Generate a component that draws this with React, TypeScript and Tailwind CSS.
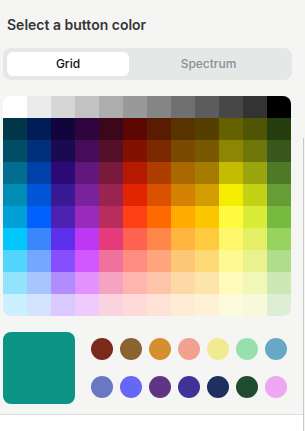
import React from 'react'

const GRID: string[][] = [
  ['#FFFFFF', '#EBEBEB', '#D6D6D6', '#C2C2C2', '#ADADAD', '#999999', '#858585', '#707070', '#5C5C5C', '#474747', '#333333', '#000000'],
  ['#00374A', '#011D57', '#11053B', '#2E063D', '#3C071B', '#5C0701', '#5A1C00', '#583300', '#563D00', '#666100', '#4F5504', '#263E0F'],
  ['#004D65', '#012F7B', '#1A0A52', '#450D59', '#551029', '#831100', '#7B2900', '#7A4A00', '#785800', '#8D8602', '#6F760A', '#38571A'],
  ['#016E8F', '#0042A9', '#2C0977', '#61187C', '#791A3D', '#B51A00', '#AD3E00', '#A96800', '#A67B01', '#C4BC00', '#9BA50E', '#4E7A27'],
  ['#008CB4', '#0056D6', '#371A94', '#7A219E', '#99244F', '#E22400', '#DA5100', '#D38301', '#D19D01', '#F5EC00', '#C3D117', '#669D34'],
  ['#00A1D8', '#0061FD', '#4D22B2', '#982ABC', '#B92D5D', '#FF4015', '#FF6A00', '#FFAB01', '#FCC700', '#FEFB41', '#D9EC37', '#76BB40'],
  ['#01C7FC', '#3A87FD', '#5E30EB', '#BE38F3', '#E63B7A', '#FE6250', '#FE8648', '#FEB43F', '#FECB3E', '#FFF76B', '#E4EF65', '#96D35F'],
  ['#52D6FC', '#74A7FF', '#864FFD', '#D357FE', '#EE719E', '#FF8C82', '#FEA57D', '#FEC777', '#FED977', '#FFF994', '#EAF28F', '#B1DD8B'],
  ['#93E3FC', '#A7C6FF', '#B18CFE', '#E292FE', '#F4A4C0', '#FFB5AF', '#FFC5AB', '#FED9A8', '#FDE4A8', '#FFFBB9', '#F1F7B7', '#CDE8B5'],
  ['#CBF0FF', '#D3E2FF', '#D9C9FE', '#EFCAFE', '#F9D3E0', '#FFDAD8', '#FFE2D6', '#FEECD4', '#FEF1D5', '#FDFBDD', '#F6FADB', '#DEEED4'],
]

const SAVED = [
  '#7A2A1B', '#8B6330', '#D48F2E', '#F2A191', '#F0EA91', '#98DFAE', '#66A8C6',
  '#6878C5', '#6767F7', '#5F3584', '#403396', '#1F2F5F', '#1F4C2F', '#EEA7F3',
]

export default function App() {
  const [tab, setTab] = React.useState('grid')
  const [selected, setSelected] = React.useState('#0C9484')

  return (
    <div className="flex h-[431px] w-[305px] bg-white font-['Inter',sans-serif]">
      <div className="flex w-[303px] flex-col">
        <div className="bg-[#f5f5f4] px-[3px] pb-[10px] border-b border-[#dcdcdc]">
          {/* Header */}
          <h2 className="pl-[4px] pt-[15px] text-[14px] font-semibold leading-[20px] text-[#363636]">
            Select a button color
          </h2>

          {/* Tabs */}
          <div className="mt-[13px] flex h-[32px] w-[289px] rounded-lg bg-[#e6e7e7] p-[4px]">
            <button
              onClick={() => setTab('grid')}
              className={`w-[122px] rounded-md text-[12px] font-medium ${
                tab === 'grid' ? 'bg-white text-[#111]' : 'text-[#8a8f98]'
              }`}
            >
              Grid
            </button>
            <button
              onClick={() => setTab('spectrum')}
              className={`flex-1 rounded-md text-[12px] font-medium ${
                tab === 'spectrum' ? 'bg-white text-[#111]' : 'text-[#8a8f98]'
              }`}
            >
              Spectrum
            </button>
          </div>

          {/* Color grid */}
          <div className="mt-[16px] grid w-[288px] grid-cols-12 overflow-hidden rounded-lg">
            {GRID.flat().map((c, i) => (
              <div
                key={i}
                onClick={() => setSelected(c)}
                className="h-[22px]"
                style={{ backgroundColor: c }}
              />
            ))}
          </div>

          {/* Current + saved */}
          <div className="mt-[16px] flex items-center gap-[16px]">
            <div className="h-[72px] w-[72px] rounded-lg" style={{ backgroundColor: selected }} />
            <div className="grid grid-cols-7 gap-x-[7px] gap-y-[16px]">
              {SAVED.map((c) => (
                <button
                  key={c}
                  onClick={() => setSelected(c)}
                  className="h-[22px] w-[22px] rounded-full"
                  style={{ backgroundColor: c }}
                />
              ))}
            </div>
          </div>
        </div>
        <div className="flex-1 bg-white" />
      </div>

      {/* edge of neighbouring panel */}
      <div className="flex w-[2px] flex-col bg-[#f5f5f4]">
        <div className="mt-[138px] flex-1 border-l border-[#c8c8c8]" />
      </div>
    </div>
  )
}
